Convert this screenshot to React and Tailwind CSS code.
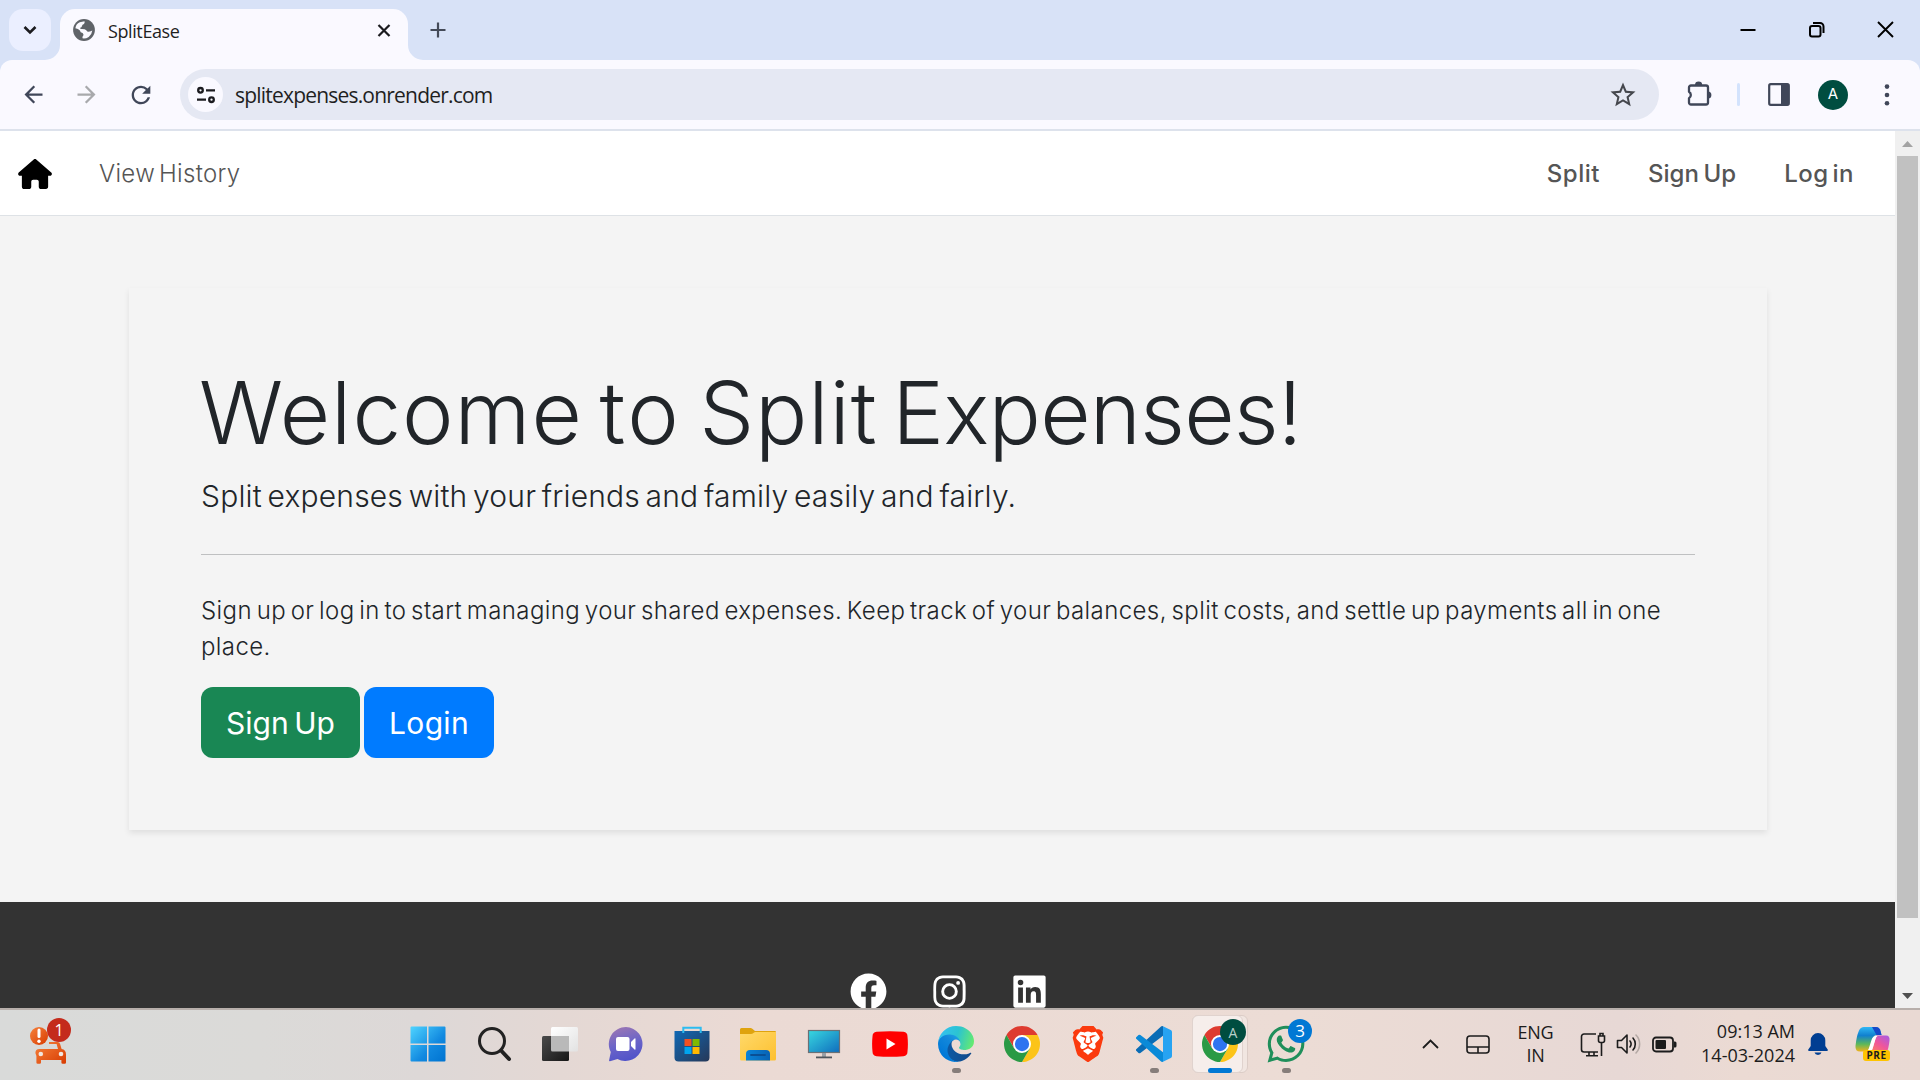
import { FaHouse } from "react-icons/fa6";
import { FaWhatsapp } from "react-icons/fa";
import { SiBrave } from "react-icons/si";
import { BiLogoFacebookCircle, BiLogoInstagram, BiLogoLinkedinSquare } from "react-icons/bi";
import { MdRefresh, MdArrowBack, MdArrowForward, MdStarOutline } from "react-icons/md";

/* ---------- browser window ---------- */

function TitleBar() {
  return (
    <div className="flex h-[60px] items-start bg-[#d8e2f7] text-[#1f1f1f]">
      <div className="mt-[9px] ml-[9px] flex size-[42px] items-center justify-center rounded-[14px] bg-[#ebefff]">
        <svg width="14" height="10" viewBox="0 0 14 10" fill="none" stroke="#1b1b1f" strokeWidth="2.6">
          <path d="M1.5 2l5.5 5.4L12.5 2" />
        </svg>
      </div>
      <svg className="mt-[45px] ml-[-6px]" width="15" height="15" viewBox="0 0 15 15">
        <path d="M15 0v15H0A15 15 0 0 0 15 0z" fill="#faf9ff" />
      </svg>
      <div className="mt-[9px] flex h-[51px] w-[348px] items-start rounded-t-[15px] bg-[#faf9ff]">
        <svg className="mt-[10px] ml-[13px]" width="22" height="22" viewBox="0 0 22 22">
          <circle cx="11" cy="11" r="10.900" fill="#5f6368" />
          <path d="M2.400 9.200Q2.900 5 6.800 3.300L11.500 2.300q.6 1.700-.6 2.600-1.700.5-1.900 2.200-.2 1.600-1.800 1.700-.4 1 .8 1.300 3.800-.3 5.300 1.200.7 1.500 2.400 1.500 2.200-.1 3.600-1.200-.4 4-3.600 6.300-3 1.900-6.200 1.400-.4-1.600.7-2.500.9-1.600-.6-2.900-2.400-.1-2.700-2.500Q5.200 9.600 2.400 9.200z" fill="#faf9ff" />
        </svg>
        <span className="mt-[7px] ml-[13px] w-[262px] text-[18px] leading-[30px] tracking-[-0.4px]">SplitEase</span>
        <svg className="mt-[15px] ml-[7px]" width="14" height="13" viewBox="0 0 14 13" stroke="#1b1b1f" strokeWidth="2.2">
          <path d="M1.5 1l11 11M12.500 1l-11 11" />
        </svg>
      </div>
      <svg className="mt-[45px]" width="15" height="15" viewBox="0 0 15 15">
        <path d="M0 0v15H15A15 15 0 0 1 0 0z" fill="#faf9ff" />
      </svg>
      <svg className="mt-[22px] ml-[7px]" width="16" height="16" viewBox="0 0 16 16" stroke="#444a58" strokeWidth="2.2">
        <path d="M8 .5v15M.5 8h15" />
      </svg>
      <div className="ml-auto flex items-center pr-[26px]">
        <svg className="mt-[21px]" width="16" height="16" viewBox="0 0 16 16" stroke="#000" strokeWidth="2">
          <path d="M.5 8h15" />
        </svg>
        <svg className="mt-[21px] ml-[52px]" width="17" height="17" viewBox="0 0 17 17" fill="none" stroke="#000" strokeWidth="2">
          <rect x="2" y="5" width="10.500" height="10.500" rx="2" />
          <path d="M5 2h7a3.500 3.500 0 0 1 3.500 3.500V12" />
        </svg>
        <svg className="mt-[21px] ml-[52px]" width="17" height="17" viewBox="0 0 17 17" stroke="#000" strokeWidth="1.900">
          <path d="M1 1l15 15M16 1L1 16" />
        </svg>
      </div>
    </div>
  );
}

function Toolbar() {
  return (
    <div className="bg-[#d8e2f7]">
      <div className="flex h-[71px] items-center rounded-t-[12px] border-b-2 border-[#dde2ec] bg-[#faf9ff] text-[#404759]">
        <MdArrowBack className="ml-[20px] size-[27px]" />
        <MdArrowForward className="ml-[26px] size-[27px] text-[#a8a9ac]" />
        <MdRefresh className="ml-[27px] size-[28px]" />
        <div className="ml-[25px] flex h-[51px] w-[1479px] items-center rounded-full bg-[#e5e8f3] pr-[21px] pl-[8px]">
          <div className="flex size-[35px] items-center justify-center rounded-full bg-[#faf9ff]">
            <svg width="20" height="18" viewBox="0 0 20 18" fill="none" stroke="#1b1b1f" strokeWidth="2.300">
              <circle cx="4.500" cy="4.300" r="2.300" />
              <path d="M10 4.300h9M1 13.700h9" />
              <circle cx="15.500" cy="13.700" r="2.300" />
            </svg>
          </div>
          <span className="ml-[12px] text-[21px] leading-[30px] tracking-[-0.8px] text-[#1f1f1f]">splitexpenses.onrender.com</span>
          <MdStarOutline className="ml-auto size-[30px] text-[#45474d]" />
        </div>
        <svg className="ml-[27px]" width="27" height="27" viewBox="0 0 27 27">
          <path d="M3 6.500a2 2 0 0 1 2-2h15a2 2 0 0 1 2 2v15a2 2 0 0 1-2 2H5a2 2 0 0 1-2-2v-4.200a3.900 3.900 0 0 0 0-6.600z" fill="none" stroke="#404759" strokeWidth="2.300" strokeLinejoin="round" />
          <path d="M9 4a3.600 3.400 0 0 1 7.200 0zM22 10.400a3.400 3.600 0 0 1 0 7.200z" fill="#404759" />
        </svg>
        <div className="ml-[24px] h-[23px] w-[3px] rounded bg-[#d3e3fd]" />
        <svg className="ml-[28px]" width="22" height="23" viewBox="0 0 22 23">
          <rect x="1.200" y="1.200" width="19.600" height="20.600" rx="1.500" fill="none" stroke="#404759" strokeWidth="2.200" />
          <path d="M13 1h8v21h-8z" fill="#404759" />
        </svg>
        <div className="ml-[28px] flex size-[30px] items-center justify-center rounded-full bg-[#004d40] font-['Inter'] text-[15px] text-white">A</div>
        <svg className="ml-[36px]" width="6" height="22" viewBox="0 0 6 22" fill="#404759">
          <circle cx="3" cy="2.600" r="2.300" />
          <circle cx="3" cy="11" r="2.300" />
          <circle cx="3" cy="19.300" r="2.300" />
        </svg>
      </div>
    </div>
  );
}

function Scrollbar() {
  return (
    <div className="flex w-[25px] flex-col items-center bg-[#f0f0f0]">
      <svg className="mt-[10px]" width="11" height="6" viewBox="0 0 11 6" fill="#a3a3a3"><path d="M0 6l5.500-6L11 6z" /></svg>
      <div className="mt-[9px] h-[762px] w-[21px] bg-[#c1c1c1]" />
      <svg className="mt-auto mb-[9px]" width="11" height="6" viewBox="0 0 11 6" fill="#505050"><path d="M0 0l5.500 6L11 0z" /></svg>
    </div>
  );
}

/* ---------- web page ---------- */

function Navbar() {
  return (
    <nav className="flex h-[85px] shrink-0 items-center border-b border-[#dee2e6] bg-white pt-[2px] text-[24px] text-[#555]">
      <FaHouse className="ml-[18px] h-[30px] w-[34px] text-black" />
      <a className="ml-[47px] font-light tracking-[0.3px] [word-spacing:-3px]">View History</a>
      <div className="ml-auto flex pr-[41px] font-medium">
        <a className="mr-[48px] tracking-[0.5px]">Split</a>
        <a className="mr-[48px] tracking-[0.05px] [word-spacing:-2px]">Sign Up</a>
        <a className="tracking-[0.5px] [word-spacing:-3px]">Log in</a>
      </div>
    </nav>
  );
}

function Hero() {
  return (
    <main className="h-[686px] shrink-0 bg-[#f4f4f4] pt-[72px] pl-[129px]">
      <section className="h-[542px] w-[1638px] p-[72px] text-[#212529] shadow-[0_3px_6px_rgba(0,0,0,0.085)]">
        <h1 className="ml-[-2px] text-[87px] leading-[105px] font-[260]">
          <span className="tracking-[1px] [word-spacing:-9px]">Welcome </span>
          <span className="tracking-[2.5px] [word-spacing:-9px]">to </span>
          <span className="tracking-[0.9px] [word-spacing:-10.7px]">Split </span>
          <span className="tracking-[-0.83px]">Expenses!</span>
        </h1>
        <p className="mt-[9px] text-[30px] leading-[45px] font-[290] tracking-[0.18px] [word-spacing:-3px]">Split expenses with your friends and family easily and fairly.</p>
        <hr className="mt-[35px] border-[#bfc0c1]" />
        <p className="mt-[38px] text-[24px] leading-[36px] font-[350] tracking-[0.41px] [word-spacing:-2.5px]">
          Sign up or log in to start managing your shared expenses. Keep track of your balances, split costs, and settle up payments all in one
          <br />
          place.
        </p>
        <div className="mt-[22px] flex gap-[4px] text-[30px] text-white">
          <button className="h-[71px] w-[159px] rounded-[12px] bg-[#198754] pt-[2px] font-[370] [word-spacing:-3px]">Sign Up</button>
          <button className="h-[71px] w-[130px] rounded-[12px] bg-[#007bff] pt-[2px] font-[370] tracking-[0.3px]">Login</button>
        </div>
      </section>
    </main>
  );
}

function Footer() {
  return (
    <footer className="flex h-[106px] shrink-0 items-start justify-center overflow-hidden bg-[#333] pt-[68px] pl-[2px] text-white">
      <BiLogoFacebookCircle className="size-[43px] shrink-0" />
      <BiLogoInstagram className="ml-[38px] size-[43px] shrink-0" />
      <BiLogoLinkedinSquare className="ml-[37px] size-[43px] shrink-0" />
    </footer>
  );
}

/* ---------- taskbar icons ---------- */

function TrafficIcon() {
  return (
    <svg width="44" height="48" viewBox="0 0 44 48">
      <defs>
        <linearGradient id="traffic" x1="0" y1="0" x2="1" y2="1">
          <stop offset="0" stopColor="#f6823c" />
          <stop offset="1" stopColor="#d83b01" />
        </linearGradient>
      </defs>
      <circle cx="9" cy="18" r="9" fill="url(#traffic)" />
      <path d="M9 12v6.500" stroke="#fff" strokeWidth="3" strokeLinecap="round" />
      <circle cx="9" cy="23.300" r="1.700" fill="#fff" />
      <path d="M19 24h8.500q2 0 2.600 2l1.500 5q4.400.5 4.400 5.500v8q0 1.300-1.300 1.300h-2q-1.300 0-1.300-1.300V42H11v2.500q0 1.300-1.300 1.300h-2q-1.300 0-1.300-1.300V38l-1-3q0-4 4-4h18.600l-1.400-5H19z" fill="url(#traffic)" />
      <circle cx="10.800" cy="36" r="2.300" fill="#f0e6e0" />
      <circle cx="31" cy="36" r="2.300" fill="#f0e6e0" />
    </svg>
  );
}

function WindowsIcon() {
  return (
    <svg width="36" height="36" viewBox="0 0 36 36">
      <defs>
        <linearGradient id="win" x1="0" y1="0" x2="1" y2="1">
          <stop offset="0" stopColor="#4fd4ff" />
          <stop offset=".6" stopColor="#1189e0" />
          <stop offset="1" stopColor="#0073d0" />
        </linearGradient>
      </defs>
      <path d="M1.500.5H17v17H.5v-16a1 1 0 0 1 1-1zM18.500.5h16a1 1 0 0 1 1 1v16h-17zM.5 19H17v16.500H1.500a1 1 0 0 1-1-1zM18.500 19h17v15.500a1 1 0 0 1-1 1h-16z" fill="url(#win)" />
    </svg>
  );
}

function SearchIcon() {
  return (
    <svg width="36" height="36" viewBox="0 0 36 36" fill="none" stroke="#222" strokeLinecap="round">
      <circle cx="16" cy="15" r="12.500" strokeWidth="3" />
      <path d="M25.500 25l7.500 8" strokeWidth="4" />
    </svg>
  );
}

function TaskViewIcon() {
  return (
    <svg width="36" height="36" viewBox="0 0 36 36">
      <defs>
        <linearGradient id="tvd" x1="0" y1="0" x2="1" y2="1">
          <stop offset="0" stopColor="#4a4a4a" />
          <stop offset="1" stopColor="#161616" />
        </linearGradient>
        <linearGradient id="tvl" x1="0" y1="0" x2="1" y2="1">
          <stop offset="0" stopColor="#fff" />
          <stop offset="1" stopColor="#e2e2e2" />
        </linearGradient>
      </defs>
      <rect x="9" y="1" width="27" height="24.500" rx="1.500" fill="url(#tvl)" />
      <rect x="0" y="10" width="27" height="25" rx="1.500" fill="url(#tvd)" />
      <path d="M9 10h18v15.500H10.500A1.500 1.500 0 0 1 9 24z" fill="#b9b9b9" />
    </svg>
  );
}

function ChatIcon() {
  return (
    <svg width="36" height="36" viewBox="0 0 36 36">
      <defs>
        <linearGradient id="chat" x1=".3" y1="0" x2=".6" y2="1">
          <stop offset="0" stopColor="#9a76b4" />
          <stop offset=".5" stopColor="#6b64c8" />
          <stop offset="1" stopColor="#4f52c9" />
        </linearGradient>
      </defs>
      <path d="M18 1a17 17 0 1 1-8.500 32L2 35.200q-1.200.2-.9-1L2.800 26A17 17 0 0 1 18 1z" fill="url(#chat)" />
      <rect x="8" y="11" width="13.500" height="14" rx="2" fill="#fff" />
      <path d="M23 16l3.500-3.500q1-.7 1 .5v10q0 1.200-1 .5L23 20z" fill="#fff" />
    </svg>
  );
}

function StoreIcon() {
  return (
    <svg width="36" height="36" viewBox="0 0 36 36">
      <defs>
        <linearGradient id="store" x1="0" y1="0" x2="1" y2="1">
          <stop offset="0" stopColor="#1068b4" />
          <stop offset="1" stopColor="#263858" />
        </linearGradient>
      </defs>
      <path d="M9.300 7V1.800h17.400V7" fill="none" stroke="#2cbcf0" strokeWidth="2" />
      <path d="M.5 5h35v26.500a4 4 0 0 1-4 4h-27a4 4 0 0 1-4-4z" fill="url(#store)" />
      <path d="M9.300 5v2M26.700 5v2" stroke="#2cbcf0" strokeWidth="2" />
      <path d="M10.500 13h7v7h-7z" fill="#f25022" />
      <path d="M18.500 13h7v7h-7z" fill="#7fba00" />
      <path d="M10.500 21h7v7h-7z" fill="#00a4ef" />
      <path d="M18.500 21h7v7h-7z" fill="#ffb900" />
    </svg>
  );
}

function FolderIcon() {
  return (
    <svg width="36" height="36" viewBox="0 0 36 36">
      <defs>
        <linearGradient id="fold" x1="0" y1="0" x2="1" y2="1">
          <stop offset="0" stopColor="#ffd96a" />
          <stop offset="1" stopColor="#fdc02f" />
        </linearGradient>
        <linearGradient id="foldb" x1="0" y1="0" x2="1" y2="0">
          <stop offset="0" stopColor="#0a84d8" />
          <stop offset="1" stopColor="#0862b4" />
        </linearGradient>
      </defs>
      <path d="M0 3.500A1.500 1.500 0 0 1 1.500 2h9q1 0 1.800.8L15 5h20q1 0 1 1.200V10H0z" fill="#dfa30e" />
      <path d="M0 8h11q1.300 0 2.200-.8l.8-.7q.6-.5 1.500-.5H36v27q0 1.500-1.500 1.500h-33Q0 34.500 0 33z" fill="url(#fold)" />
      <path d="M6 34.500V28q0-4 4-4h16q4 0 4 4v6.500z" fill="url(#foldb)" />
      <path d="M11 29h14" stroke="#0a4f94" strokeWidth="1.800" strokeLinecap="round" />
    </svg>
  );
}

function MonitorIcon() {
  return (
    <svg width="36" height="36" viewBox="0 0 36 36">
      <defs>
        <linearGradient id="mon" x1="0" y1="0" x2="1" y2="1">
          <stop offset="0" stopColor="#38d8e0" />
          <stop offset="1" stopColor="#0f6cbd" />
        </linearGradient>
      </defs>
      <rect x="2.500" y="4.500" width="31" height="22" fill="url(#mon)" stroke="#6b7075" strokeWidth="1.200" />
      <path d="M16 27h4v4h-4z" fill="#9aa0a6" />
      <path d="M10 30.500h16v1.800H10z" fill="#50565c" />
    </svg>
  );
}

function YouTubeIcon() {
  return (
    <svg width="36" height="36" viewBox="0 0 36 36">
      <path d="M4.500 5.800q13.500-1.200 27 0 4 .4 4 4.700.8 7.500 0 15 0 4.300-4 4.700-13.500 1.200-27 0-4-.4-4-4.700-.8-7.500 0-15 0-4.300 4-4.700z" fill="#f00" />
      <path d="M14.500 12.500v11l9-5.500z" fill="#fff" />
    </svg>
  );
}

function EdgeIcon() {
  return (
    <svg width="36" height="36" viewBox="0 0 256 256">
      <defs>
        <linearGradient id="ea" x1="64" y1="178" x2="232" y2="178" gradientUnits="userSpaceOnUse">
          <stop offset="0" stopColor="#0c59a4" />
          <stop offset="1" stopColor="#114a8b" />
        </linearGradient>
        <linearGradient id="eb" x1="157" y1="100" x2="46" y2="221" gradientUnits="userSpaceOnUse">
          <stop offset="0" stopColor="#1b9de2" />
          <stop offset=".3" stopColor="#1388db" />
          <stop offset="1" stopColor="#0078d7" />
        </linearGradient>
        <linearGradient id="ec" x1="10" y1="40" x2="256" y2="110" gradientUnits="userSpaceOnUse">
          <stop offset="0" stopColor="#35c1f1" />
          <stop offset=".5" stopColor="#2bc3d2" />
          <stop offset="1" stopColor="#66eb6e" />
        </linearGradient>
      </defs>
      <path d="M231 190.500c-3.400 1.800-6.900 3.400-10.500 4.700a101.700 101.700 0 0 1-35.900 6.400c-47.300 0-88.500-32.500-88.500-74.300 0-11.500 6.400-21.900 16.400-27.300-42.800 1.800-53.800 46.400-53.800 72.500 0 73.900 68.100 81.400 82.800 81.400 7.900 0 19.800-2.300 27-4.600l1.300-.4a128.300 128.300 0 0 0 66.600-52.800 4 4 0 0 0-5.400-5.600z" fill="url(#ea)" />
      <path d="M105.700 241.400a79.200 79.200 0 0 1-22.700-21.300 80.700 80.700 0 0 1 29.500-120c3.100-1.500 8.500-4.100 15.600-4a32.400 32.400 0 0 1 25.700 13 31.900 31.900 0 0 1 6.300 18.700c0-.2 24.500-79.600-80-79.600-43.900 0-80 41.700-80 78.200a130.200 130.200 0 0 0 12.100 56 128 128 0 0 0 156.400 67 75.500 75.500 0 0 1-62.800-8z" fill="url(#eb)" />
      <path d="M152.300 148.900c-.8 1-3.300 2.500-3.300 5.700 0 2.600 1.700 5.100 4.700 7.200 14.400 10 41.500 8.700 41.600 8.700a59.600 59.600 0 0 0 30.300-8.300 61.400 61.400 0 0 0 30.400-52.900c.3-22.400-8-37.300-11.300-43.900C223.500 23.900 177.700 0 128 0A128 128 0 0 0 0 126.200c.5-36.500 36.800-66 80-66 3.500 0 23.500.3 42 10 16.300 8.600 24.900 18.900 30.800 29.200 6.200 10.700 7.300 24.100 7.300 29.500s-2.700 13.300-7.800 20z" fill="url(#ec)" />
    </svg>
  );
}

function ChromeIcon() {
  return (
    <svg width="36" height="36" viewBox="0 0 48 48">
      <path d="M44.780 12A24 24 0 0 1 24 48l10.400-18L24 12z" fill="#fcc419" />
      <path d="M24 12h20.780A24 24 0 0 0 3.220 12l10.400 18L24 24z" fill="#de3b30" />
      <path d="M3.220 12A24 24 0 0 0 24 48l10.400-18H13.600z" fill="#2a9a45" />
      <circle cx="24" cy="24" r="12" fill="#fff" />
      <circle cx="24" cy="24" r="9.500" fill="#2e74f0" />
    </svg>
  );
}

function BraveIcon() {
  return (
    <div className="relative size-[36px]">
      <svg className="absolute inset-0" width="36" height="36" viewBox="0 0 36 36">
        <path d="M10.500 3h15l2.500 3 2-.3 1.800 3-1 2.700.9 3L27.200 28 18 34.500 8.800 28 4.300 14.400l.9-3-1-2.700 1.800-3 2 .3z" fill="#fff" />
      </svg>
      <SiBrave className="relative size-[36px] text-[#fb3a0e]" />
    </div>
  );
}

function VSCodeIcon() {
  return (
    <svg width="36" height="36" viewBox="0 0 24 24">
      <path d="M7.045 9.130L3.899 12l-3.573 3.260a1 1 0 0 0 0 1.479L1.650 17.940a1 1 0 0 0 1.276.057L18.004 6.552V.15a1.500 1.500 0 0 0-1.500.35z" fill="#0a6cb5" />
      <path d="M.327 7.261L1.650 6.059a1 1 0 0 1 1.276-.057l15.078 11.446v6.400a1.500 1.500 0 0 1-1.500-.35L.326 8.740a1 1 0 0 1 0-1.479z" fill="#0a8ad8" />
      <path d="M18.004.15L23.150 2.587A1.500 1.500 0 0 1 24 3.939V20.060a1.500 1.500 0 0 1-.85 1.353L18.004 23.850z" fill="#27a3f2" />
    </svg>
  );
}

/* ---------- taskbar ---------- */

function TaskItem({ children, running, active }) {
  return (
    <div className="relative flex h-[72px] w-[66px] items-start justify-center pt-[16px]">
      {active && <div className="absolute top-[5px] left-[5px] h-[58px] w-[56px] rounded-[6px] border border-[#dccdc7] bg-[#f1e6e1]" />}
      {active && <div className="absolute top-[5px] left-[5px] h-[58px] w-[51px] rounded-[6px] border border-[#e0d3ce] bg-[#f6eeeb]" />}
      <div className="relative">{children}</div>
      {running && <div className="absolute top-[58px] h-[5px] w-[9px] rounded-full bg-[#867d7a]" />}
      {active && <div className="absolute top-[58px] h-[5px] w-[24px] rounded-full bg-[#0078d4]" />}
    </div>
  );
}

function Taskbar() {
  return (
    <div className="flex h-[72px] items-start border-t-2 border-[#b8afab] bg-[linear-gradient(90deg,#d9dad9_0px,#dbdad8_260px,#ddd8d7_420px,#e4d8d4_560px,#ebdad4_760px,#ecdcd5_1300px,#e7d8d5_1620px,#ebdad3_1740px,#e9d9d3_1920px)] text-[#1c1c1c]">
      <div className="relative mt-[8px] ml-[30px] w-[366px]">
        <TrafficIcon />
        <div className="absolute top-0 left-[17px] flex size-[24px] items-center justify-center rounded-full bg-[#c42b1c] text-[16px] text-white">1</div>
      </div>
      <div className="-ml-px flex">
        <TaskItem><WindowsIcon /></TaskItem>
        <TaskItem><SearchIcon /></TaskItem>
        <TaskItem><TaskViewIcon /></TaskItem>
        <TaskItem><ChatIcon /></TaskItem>
        <TaskItem><StoreIcon /></TaskItem>
        <TaskItem><FolderIcon /></TaskItem>
        <TaskItem><MonitorIcon /></TaskItem>
        <TaskItem><YouTubeIcon /></TaskItem>
        <TaskItem running><EdgeIcon /></TaskItem>
        <TaskItem><ChromeIcon /></TaskItem>
        <TaskItem><BraveIcon /></TaskItem>
        <TaskItem running><VSCodeIcon /></TaskItem>
        <TaskItem active>
          <ChromeIcon />
          <div className="absolute -top-[7px] left-[18px] flex size-[26px] items-center justify-center rounded-full bg-[#004d40] text-[14px] text-[#b8d0cb]">A</div>
        </TaskItem>
        <TaskItem running>
          <FaWhatsapp className="-m-[3px] size-[42px] text-[#1f8f5b]" />
          <div className="absolute -top-[7px] left-[20px] flex size-[24px] items-center justify-center rounded-full bg-[#0078d4] text-[17px] text-white">3</div>
        </TaskItem>
      </div>

      <div className="ml-auto flex h-[70px] items-center pb-[2px]">
        <svg className="-mt-[1px]" width="17" height="10" viewBox="0 0 17 10" fill="none" stroke="#1c1c1c" strokeWidth="1.800"><path d="M1 9l7.500-7.500L16 9" /></svg>
        <svg className="ml-[27px]" width="24" height="19" viewBox="0 0 24 19" fill="none" stroke="#1c1c1c" strokeWidth="1.600">
          <rect x="1" y="1" width="22" height="17" rx="3" />
          <path d="M1 12h22M12 12v6" />
        </svg>
        <div className="ml-[27px] w-[37px] text-center text-[18px] leading-[23px] tracking-[-0.25px]">ENG<br />IN</div>
        <svg className="ml-[26px]" width="26" height="25" viewBox="0 0 26 25" fill="none" stroke="#1c1c1c" strokeWidth="1.600">
          <path d="M16 2H4a2.500 2.500 0 0 0-2.500 2.500v13A2.500 2.500 0 0 0 4 20h14M9 20v3.500M14 20v3.500M6 23.700h12M21.500 10.500V24M18.500 4h6v4.500a2 2 0 0 1-2 2h-2a2 2 0 0 1-2-2zM20 4V1.500h3V4" />
        </svg>
        <svg className="ml-[10px]" width="26" height="22" viewBox="0 0 26 22" fill="none" stroke="#1c1c1c" strokeWidth="1.600" strokeLinecap="round" strokeLinejoin="round">
          <path d="M1.500 7.500h4L11 2v18l-5.500-5.500h-4z" />
          <path d="M14 8a5 5 0 0 1 0 6M17 5a9 9 0 0 1 0 12" />
          <path d="M20 2a13 13 0 0 1 0 18" stroke="#b3a8a4" />
        </svg>
        <svg className="ml-[10px]" width="25" height="17" viewBox="0 0 25 17">
          <rect x="1" y="1.500" width="20" height="14" rx="3" fill="none" stroke="#1c1c1c" strokeWidth="1.800" />
          <rect x="3.500" y="4" width="10.500" height="9" rx="1" fill="#1c1c1c" />
          <path d="M22 5.500h1q1.500 0 1.500 1.500v3q0 1.500-1.500 1.500h-1z" fill="#1c1c1c" />
        </svg>
        <div className="mt-[-2px] ml-[23px] w-[95px] text-right text-[18px] leading-[24px]">09:13 AM<br />14-03-2024</div>
        <svg className="ml-[13px]" width="20" height="23" viewBox="0 0 20 23" fill="#003e92">
          <path d="M10 0a7.300 7.300 0 0 1 7.300 7.300V13l2.400 3.600q.6 1.400-.9 1.400H1.200q-1.500 0-.9-1.400L2.700 13V7.300A7.300 7.300 0 0 1 10 0zM6.500 19.500h7a3.600 3.200 0 0 1-7 0z" />
        </svg>
        <div className="relative mr-[30px] ml-[27px] h-[34px] w-[35px]">
          <svg width="35" height="30" viewBox="0 0 35 30">
            <defs>
              <linearGradient id="cpa" x1="0" y1="0" x2="0" y2="1">
                <stop offset="0" stopColor="#2fb7f5" />
                <stop offset=".35" stopColor="#1180cf" />
                <stop offset=".7" stopColor="#5cb85a" />
                <stop offset="1" stopColor="#f2b21c" />
              </linearGradient>
              <linearGradient id="cpb" x1="1" y1="0" x2=".3" y2="1">
                <stop offset="0" stopColor="#a45be8" />
                <stop offset=".5" stopColor="#f0569a" />
                <stop offset="1" stopColor="#fd8a57" />
              </linearGradient>
            </defs>
            <path d="M9 0h12q3.500 0 4.500 4l1 4H22q-3.500 0-4.500 4l-2.700 9q-1 3.500-4.500 3.500H5Q0 24.500.5 19 1.500 9 4 3.500 5.500 0 9 0z" fill="url(#cpa)" />
            <path d="M17 0h4q3.500 0 4.500 4l1 4h-5z" fill="#1548c8" />
            <path d="M21.500 8.500H31q4 0 3.500 5-.8 8-3 12.500-1.200 3-4.500 3H13q2.700-1 3.600-4z" fill="url(#cpb)" />
            <path d="M20.500 9q-3 .5-4 4l-2.700 8.500q-.8 2.500-3 3h4q2-.5 2.800-3L20.500 12q.6-2 2-3z" fill="#fff" />
          </svg>
          <div className="absolute top-[23px] left-[8px] flex h-[11px] w-[27px] items-center justify-center rounded-[3px] bg-[#fec400] text-[10px] font-bold tracking-[0.5px]">PRE</div>
        </div>
      </div>
    </div>
  );
}

export default function App() {
  return (
    <div className="flex h-[1080px] w-[1920px] flex-col overflow-hidden bg-white font-['Open_Sans',sans-serif]">
      <TitleBar />
      <Toolbar />
      <div className="flex h-[877px] overflow-hidden">
        <div className="flex w-[1895px] flex-col overflow-hidden font-['Inter',sans-serif]">
          <Navbar />
          <Hero />
          <Footer />
        </div>
        <Scrollbar />
      </div>
      <Taskbar />
    </div>
  );
}
